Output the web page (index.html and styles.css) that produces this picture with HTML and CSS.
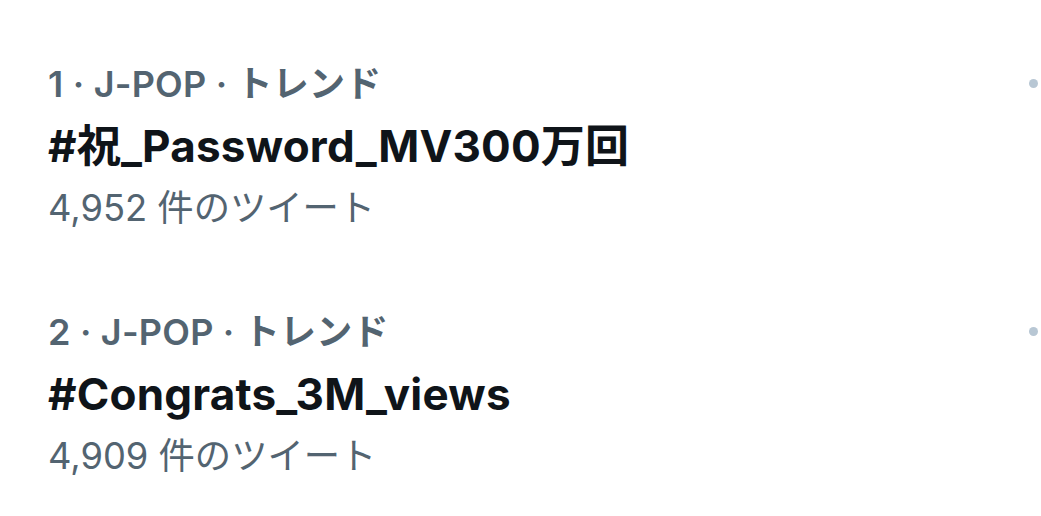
FILE: index.html
```
<!DOCTYPE html>
<html lang="ja">
<head>
    <meta charset="UTF-8">
    <title>トレンド</title>
    <meta name="viewport" content="width=device-width, initial-scale=1.0">
    <link rel="stylesheet" href="styles.css">
</head>
<body>
    <div class="trends">
        <div class="trend">
            <div class="trend-body">
                <div class="meta">1 · J-POP · トレンド</div>
                <div class="title">#祝_Password_MV300万回</div>
                <div class="count">4,952 件のツイート</div>
            </div>
            <svg class="more" width="9" height="9" viewBox="0 0 9 9"><circle cx="4.5" cy="4.5" r="4.5"/></svg>
        </div>
        <div class="trend">
            <div class="trend-body">
                <div class="meta">2 · J-POP · トレンド</div>
                <div class="title">#Congrats_3M_views</div>
                <div class="count">4,909 件のツイート</div>
            </div>
            <svg class="more" width="9" height="9" viewBox="0 0 9 9"><circle cx="4.5" cy="4.5" r="4.5"/></svg>
        </div>
    </div>
</body>
</html>
```

FILE: styles.css
```
body {
    margin: 0;
    background: #fff;
    font-family: 'Inter', 'Noto Sans CJK JP', sans-serif;
    overflow: hidden;
}
.trends {
    padding-top: 53px;
    display: flex;
    flex-direction: column;
    gap: 62px;
}
.trend {
    display: flex;
    justify-content: space-between;
    align-items: flex-start;
    padding-left: 48px;
}
.meta {
    font-size: 36px;
    line-height: 62px;
    font-weight: 600;
    letter-spacing: 0.2px;
    color: #536471;
}
.count {
    font-size: 36.3px;
    line-height: 62px;
    color: #536471;
}
.title {
    font-size: 44px;
    line-height: 62px;
    font-weight: 700;
    letter-spacing: 0.2px;
    color: #0f1419;
}
.more {
    fill: #b8c7d4;
    margin-top: 26px;
    margin-right: 3px;
}
```
